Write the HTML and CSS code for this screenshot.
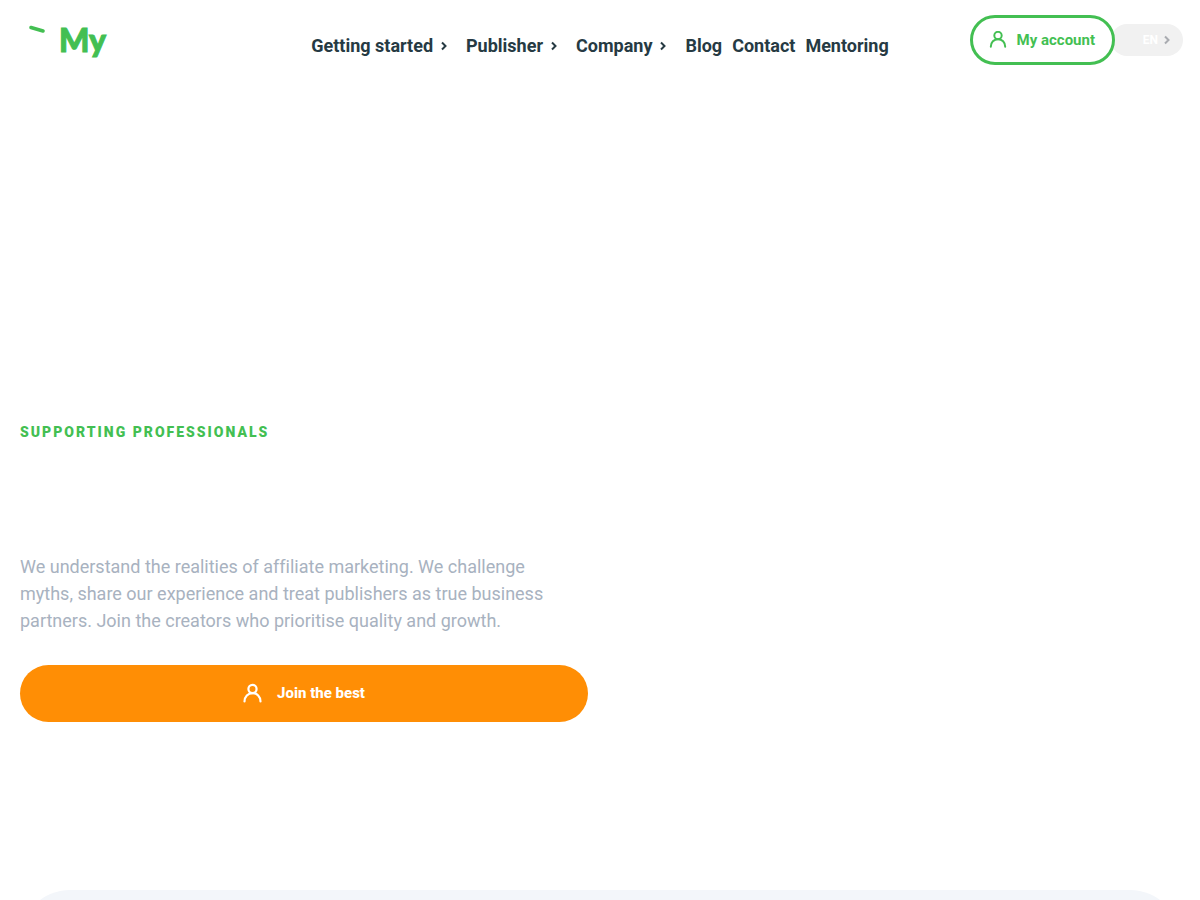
FILE: index.html
```html
<!DOCTYPE html>
<html lang="en">
<head>
    <meta charset="UTF-8">
    <meta name="viewport" content="width=device-width, initial-scale=1.0">
    <title>My</title>
    <link rel="stylesheet" href="styles.css">
</head>
<body>
    <header class="header">
        <a href="#" class="logo">
            <svg class="logo-mark" width="18" height="10" viewBox="0 0 18 10">
                <path d="M3 2.5L15 6" fill="none" stroke="currentColor" stroke-width="3.6" stroke-linecap="round"/>
            </svg>
            <span>My</span>
        </a>

        <nav class="nav">
            <a href="#" class="nav-link has-menu">Getting started
                <svg class="chevron" width="6" height="10" viewBox="0 0 6 10"><path d="M1 1.5L4.5 5L1 8.5"/></svg>
            </a>
            <a href="#" class="nav-link has-menu">Publisher
                <svg class="chevron" width="6" height="10" viewBox="0 0 6 10"><path d="M1 1.5L4.5 5L1 8.5"/></svg>
            </a>
            <a href="#" class="nav-link has-menu">Company
                <svg class="chevron" width="6" height="10" viewBox="0 0 6 10"><path d="M1 1.5L4.5 5L1 8.5"/></svg>
            </a>
            <a href="#" class="nav-link">Blog</a>
            <a href="#" class="nav-link">Contact</a>
            <a href="#" class="nav-link">Mentoring</a>
        </nav>

        <div class="actions">
            <a href="#" class="account-button">
                <svg class="user-icon" width="18" height="18" viewBox="0 0 20 20">
                    <circle cx="10" cy="5" r="4.1"/>
                    <path d="M2 17.5C2 12.5 5.5 9.1 10 9.1S18 12.5 18 17.5"/>
                </svg>
                My account
            </a>
            <button type="button" class="lang-button">EN
                <svg class="chevron" width="6" height="10" viewBox="0 0 6 10"><path d="M1 1.5L4.5 5L1 8.5"/></svg>
            </button>
        </div>
    </header>

    <main>
        <section class="hero">
            <div class="hero-text">
                <p class="eyebrow">Supporting professionals</p>
                <p class="lead">We understand the realities of affiliate marketing. We challenge myths, share our experience and treat publishers as true business partners. Join the creators who prioritise quality and growth.</p>
                <a href="#" class="join-button">
                    <svg class="user-icon" width="20" height="20" viewBox="0 0 20 20">
                        <circle cx="9.5" cy="6" r="4.1"/>
                        <path d="M1.5 18.5C1.5 13.5 5 10.1 9.5 10.1S17.5 13.5 17.5 18.5"/>
                    </svg>
                    Join the best
                </a>
            </div>
        </section>

        <section class="panel"></section>
    </main>
</body>
</html>
```
FILE: styles.css
```css
* {
    box-sizing: border-box;
}

body {
    margin: 0;
    font-family: Roboto, sans-serif;
    background-color: #fff;
    color: #263a43;
}

a {
    color: inherit;
    text-decoration: none;
}

.header {
    display: grid;
    grid-template-columns: 1fr auto 1fr;
    align-items: center;
    height: 80px;
    padding: 0 17px;
}

.logo {
    display: flex;
    gap: 13px;
    margin-left: 11px;
    color: #43bf52;
    font-family: Lato, sans-serif;
    font-size: 32px;
    font-weight: 900;
    line-height: 40px;
    -webkit-text-stroke: 1px #43bf52;
}

.logo-mark {
    margin-top: 5px;
}

.nav {
    display: flex;
    gap: 10px;
    padding-top: 11px;
    font-size: 18px;
    font-weight: 700;
    line-height: 24px;
}

.nav-link {
    display: flex;
    align-items: center;
    gap: 8px;
}

.has-menu {
    padding-right: 9px;
}

.chevron {
    fill: none;
    stroke: currentColor;
    stroke-width: 2;
}

.actions {
    display: flex;
    justify-content: flex-end;
    align-items: center;
}

.account-button {
    position: relative;
    display: flex;
    align-items: center;
    gap: 10px;
    height: 50px;
    padding: 0 17px 0 16px;
    border: 3px solid #43bf52;
    border-radius: 25px;
    background-color: #fff;
    color: #43bf52;
    font-size: 15px;
    font-weight: 700;
    white-space: nowrap;
}

.user-icon {
    fill: none;
    stroke: currentColor;
    stroke-width: 2.2;
    stroke-linecap: round;
}

.lang-button {
    display: flex;
    align-items: center;
    justify-content: flex-end;
    gap: 6px;
    width: 72px;
    height: 32px;
    margin-left: -4px; /* tucks under the account button */
    padding: 0 13px 0 0;
    border: none;
    border-radius: 16px;
    background-color: #f1f1f1;
    color: #fff;
    font-family: inherit;
    font-size: 12px;
    font-weight: 700;
    cursor: pointer;
}

.lang-button .chevron {
    color: #a9abb0;
}

.hero {
    display: grid;
    grid-template-columns: 1fr 1fr;
    gap: 24px;
    padding: 342px 20px 168px;
}

.eyebrow {
    margin: 0 0 111px;
    color: #43bf52;
    font-size: 14px;
    font-weight: 900;
    line-height: 20px;
    letter-spacing: 2px;
    text-transform: uppercase;
}

.lead {
    max-width: 540px;
    margin: 0 0 31px;
    color: #a8b2c0;
    font-size: 18px;
    line-height: 27px;
    font-variant-ligatures: none;
}

.join-button {
    display: flex;
    align-items: center;
    justify-content: center;
    gap: 14px;
    height: 57px;
    padding-bottom: 2px;
    border-radius: 29px;
    background-color: #ff8e05;
    color: #fff;
    font-size: 15px;
    font-weight: 800;
}

.panel {
    min-height: 400px;
    margin: 0 20px;
    border-radius: 50px;
    background-color: #f3f6fa;
}
```
